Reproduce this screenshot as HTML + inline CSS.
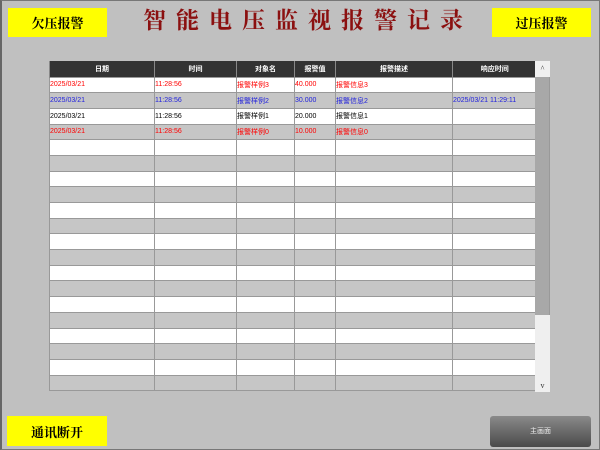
<!DOCTYPE html>
<html><head><meta charset="utf-8"><style>
*{margin:0;padding:0;box-sizing:border-box}
body{width:600px;height:450px;background:#c0c0c0;position:relative;overflow:hidden;font-family:"Liberation Serif","Noto Serif CJK SC",serif}
.frame{position:absolute;left:0;top:0;width:600px;height:450px;border:1px solid #777;border-left:2px solid #666}
.ybtn{position:absolute;background:#ffff00;color:#000;font-weight:bold;font-size:13px;display:flex;align-items:center;justify-content:center;font-family:"Noto Serif CJK SC",serif}
.title{position:absolute;left:143px;top:5px;font-size:23px;line-height:28px;color:#8b1010;letter-spacing:10px;font-weight:bold;font-family:"Noto Serif CJK SC",serif;white-space:nowrap}
table{position:absolute;left:49px;top:61px;border-collapse:collapse;width:487px;table-layout:fixed;font-family:"Liberation Sans","Noto Sans CJK SC",sans-serif;font-size:7px}
th{background:#333;color:#fff;height:16px;border-left:1px solid #888;font-weight:bold}
td{height:15.7px;border:1px solid #999;padding-left:0;white-space:nowrap;overflow:hidden}
tr:nth-child(even) td{background:#fff}
tr:nth-child(odd) td{background:#c6c6c6}
.r{color:#f00}.b{color:#22d}
.sb{position:absolute;left:535px;top:61px;width:15px;height:331px;background:#a8a8a8;border-right:1px solid #999}
.sb .up{position:absolute;top:0;left:0;width:15px;height:16px;background:#f0f0f0;font-size:8px;text-align:center;line-height:16px;color:#333}
.sb .th{position:absolute;top:254px;left:0;width:15px;height:77px;background:#efefef;font-size:8px;text-align:center;color:#333}
.main{position:absolute;left:490px;top:416px;width:101px;height:31px;background:linear-gradient(#8a8a8a,#4a4a4a);border-radius:3px;color:#eee;font-size:7px;text-align:center;line-height:31px;font-family:"Noto Sans CJK SC",sans-serif}
</style></head><body>
<div class="frame"></div>
<div class="ybtn" style="left:8px;top:8px;width:99px;height:29px">欠压报警</div>
<div class="ybtn" style="left:492px;top:8px;width:99px;height:29px">过压报警</div>
<div class="ybtn" style="left:7px;top:416px;width:100px;height:30px">通讯断开</div>
<div class="title">智能电压监视报警记录</div>
<table>
<colgroup><col style="width:105px"><col style="width:82px"><col style="width:58px"><col style="width:41px"><col style="width:117px"><col style="width:84px"></colgroup>
<tr><th>日期</th><th>时间</th><th>对象名</th><th>报警值</th><th>报警描述</th><th>响应时间</th></tr>
<tr class="r"><td>2025/03/21</td><td>11:28:56</td><td>报警样例3</td><td>40.000</td><td>报警信息3</td><td></td></tr>
<tr class="b"><td>2025/03/21</td><td>11:28:56</td><td>报警样例2</td><td>30.000</td><td>报警信息2</td><td>2025/03/21 11:29:11</td></tr>
<tr><td>2025/03/21</td><td>11:28:56</td><td>报警样例1</td><td>20.000</td><td>报警信息1</td><td></td></tr>
<tr class="r"><td>2025/03/21</td><td>11:28:56</td><td>报警样例0</td><td>10.000</td><td>报警信息0</td><td></td></tr>
<tr><td></td><td></td><td></td><td></td><td></td><td></td></tr>
<tr><td></td><td></td><td></td><td></td><td></td><td></td></tr>
<tr><td></td><td></td><td></td><td></td><td></td><td></td></tr>
<tr><td></td><td></td><td></td><td></td><td></td><td></td></tr>
<tr><td></td><td></td><td></td><td></td><td></td><td></td></tr>
<tr><td></td><td></td><td></td><td></td><td></td><td></td></tr>
<tr><td></td><td></td><td></td><td></td><td></td><td></td></tr>
<tr><td></td><td></td><td></td><td></td><td></td><td></td></tr>
<tr><td></td><td></td><td></td><td></td><td></td><td></td></tr>
<tr><td></td><td></td><td></td><td></td><td></td><td></td></tr>
<tr><td></td><td></td><td></td><td></td><td></td><td></td></tr>
<tr><td></td><td></td><td></td><td></td><td></td><td></td></tr>
<tr><td></td><td></td><td></td><td></td><td></td><td></td></tr>
<tr><td></td><td></td><td></td><td></td><td></td><td></td></tr>
<tr><td></td><td></td><td></td><td></td><td></td><td></td></tr>
<tr><td></td><td></td><td></td><td></td><td></td><td></td></tr>
</table>
<div class="sb"><div class="up">^</div><div class="th"><div style="position:absolute;bottom:2px;width:15px">v</div></div></div>
<div class="main">主画面</div>
</body></html>
